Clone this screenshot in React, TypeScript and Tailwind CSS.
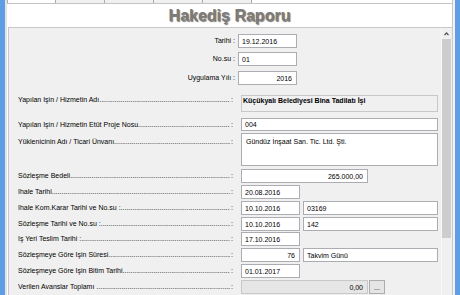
import React from "react";

const dots = ".".repeat(180);

type BoxProps = {
  value?: string;
  className?: string;
  right?: boolean;
  readOnly?: boolean;
};

function Box({ value = "", className = "", right = false, readOnly = false }: BoxProps) {
  return (
    <div
      className={`shrink-0 border flex items-center px-[3px] text-[7px] leading-none text-black ${
        readOnly ? "bg-[#e6e6e6] border-[#c8c8c8]" : "bg-white border-[#abadb3]"
      } ${right ? "justify-end pr-[4px]" : ""} ${className}`}
    >
      {value}
    </div>
  );
}

function Leader({ text, pad = "" }: { text: string; pad?: string }) {
  return (
    <div className={`w-[231px] shrink-0 pl-[9px] pr-[7px] flex ${pad || "items-center"}`}>
      <span className="flex-1 min-w-0 overflow-hidden whitespace-nowrap">
        {text}
        {dots}
      </span>
      <span className="pl-[1px]">:</span>
    </div>
  );
}

function Row({
  label,
  pad,
  className = "",
  children,
}: {
  label: string;
  pad?: string;
  className?: string;
  children: React.ReactNode;
}) {
  return (
    <div className={`flex ${className}`}>
      <Leader text={label} pad={pad} />
      {children}
    </div>
  );
}

function TopRow({ label, value, right, className = "" }: { label: string; value: string; right?: boolean; className?: string }) {
  return (
    <div className={`flex h-[14px] ${className}`}>
      <div className="w-[229px] shrink-0 pr-[3px] flex items-center justify-end whitespace-nowrap">
        {label} :
      </div>
      <Box value={value} right={right} className="w-[59px] h-[14px]" />
    </div>
  );
}

export default function App() {
  return (
    <div className="w-[460px] h-[295px] overflow-hidden flex bg-white font-['Liberation_Sans',Arial,sans-serif] text-[7px] leading-[8px] text-black">
      <div className="w-[5px] shrink-0 bg-[#5f9ee6]" />
      <div className="w-[2px] shrink-0 bg-[#e4e4e4]" />

      <div className="w-[445px] shrink-0 flex flex-col">
        {/* tab strip */}
        <div className="h-[3px] flex shrink-0">
          <div className="w-[49px] border-x border-[#acacac] bg-white" />
          <div className="w-[49px] border-r border-[#acacac] bg-[#f0f0f0]" />
          <div className="w-[49px] border-r border-[#acacac] bg-[#f0f0f0]" />
          <div className="w-[49px] border-r border-[#acacac] bg-[#f0f0f0]" />
          <div className="w-[49px] border-r border-[#acacac] bg-[#f0f0f0]" />
          <div className="flex-1" />
        </div>

        {/* title */}
        <div className="h-[24px] shrink-0 border-t border-[#c4c4c4] flex items-center justify-center">
          <span className="text-[16px] leading-[18px] font-bold text-[#7b7b7b] [text-shadow:1px_1px_1px_rgba(0,0,0,0.55)]">
            Hakediş Raporu
          </span>
        </div>

        {/* panel */}
        <div className="flex-1 ml-[1px] flex border-t border-l border-[#c8c8c8] bg-[#f0f0f0] overflow-hidden">
          <div className="w-[432px] shrink-0 flex flex-col">
            <TopRow label="Tarihi" value="19.12.2016" className="mt-[6px]" />
            <TopRow label="No.su" value="01" className="mt-[4px]" />
            <TopRow label="Uygulama Yılı" value="2016" right className="mt-[5px]" />

            <Row label="Yapılan İşin / Hizmetin Adı" pad="items-start pt-[1px]" className="mt-[10px] h-[17px]">
              <div className="w-[197px] ml-[1px] h-[17px] border border-[#c8c8c8] bg-[#f0f0f0] px-[1px] pt-[1px] font-bold whitespace-nowrap">
                Küçükyalı Belediyesi Bina Tadilatı İşi
              </div>
            </Row>

            <Row label="Yapılan İşin / Hizmetin Etüt Proje Nosu" className="mt-[6px] h-[13px]">
              <Box value="004" className="w-[197px] h-[13px] ml-[1px]" />
            </Row>

            <Row label="Yüklenicinin Adı / Ticari Ünvanı" pad="items-start pt-[5px]" className="mt-[2px] h-[33px]">
              <div className="w-[197px] ml-[1px] h-[33px] border border-[#abadb3] bg-white pl-[4px] pt-[4px] whitespace-nowrap">
                Gündüz İnşaat San. Tic. Ltd. Şti.
              </div>
            </Row>

            <Row label="Sözleşme Bedeli" className="mt-[3px] h-[14px]">
              <Box value="265.000,00" right className="w-[127px] h-[14px] ml-[1px]" />
            </Row>

            <Row label="İhale Tarihi" className="mt-[2px] h-[14px]">
              <Box value="20.08.2016" className="w-[59px] h-[14px] ml-[1px]" />
            </Row>

            <Row label="İhale Kom.Karar Tarihi ve No.su :" className="mt-[2px] h-[14px]">
              <Box value="10.10.2016" className="w-[59px] h-[14px] ml-[1px]" />
              <Box value="03169" className="w-[135px] h-[14px] ml-[3px]" />
            </Row>

            <Row label="Sözleşme Tarihi ve No.su :" className="mt-[2px] h-[14px]">
              <Box value="10.10.2016" className="w-[59px] h-[14px] ml-[1px]" />
              <Box value="142" className="w-[135px] h-[14px] ml-[3px]" />
            </Row>

            <Row label="İş Yeri Teslim Tarihi :" className="mt-[1px] h-[14px]">
              <Box value="17.10.2016" className="w-[59px] h-[14px] ml-[1px]" />
            </Row>

            <Row label="Sözleşmeye Göre İşin Süresi" className="mt-[2px] h-[14px]">
              <Box value="76" right className="w-[59px] h-[14px] ml-[1px]" />
              <Box value="Takvim Günü" className="w-[135px] h-[14px] ml-[3px]" />
            </Row>

            <Row label="Sözleşmeye Göre İşin Bitim Tarihi" className="mt-[2px] h-[14px]">
              <Box value="01.01.2017" className="w-[59px] h-[14px] ml-[1px]" />
            </Row>

            <Row label="Verilen Avanslar Toplamı " className="mt-[2px] h-[14px]">
              <Box value="0,00" right readOnly className="w-[127px] h-[14px] ml-[1px]" />
              <div className="w-[16px] h-[14px] ml-[1px] border border-[#acacac] bg-[#e5e5e5] flex items-center justify-center leading-none">
                ...
              </div>
            </Row>
          </div>

          {/* scrollbar */}
          <div className="w-[10px] shrink-0 flex flex-col bg-[#f0f0f0] border-l border-[#f8f8f8]">
            <div className="h-[11px] shrink-0 flex items-center justify-center">
              <svg width="5" height="4" viewBox="0 0 5 4">
                <path d="M0.5 3.2 L2.5 1 L4.5 3.2" fill="none" stroke="#505050" strokeWidth="1.2" />
              </svg>
            </div>
            <div className="h-[199px] shrink-0 bg-[#cdcdcd]" />
            <div className="flex-1" />
          </div>
        </div>
      </div>

      <div className="w-[1px] shrink-0 bg-[#c8c8c8]" />
      <div className="w-[2px] shrink-0 bg-[#f2f2f2]" />
      <div className="w-[5px] shrink-0 bg-[#5f9ee6]" />
    </div>
  );
}
